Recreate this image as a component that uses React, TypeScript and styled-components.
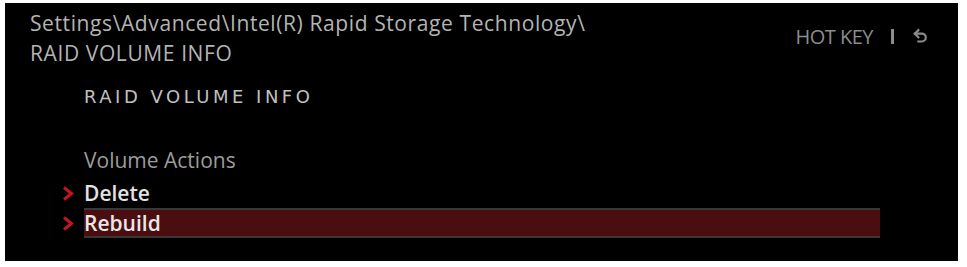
import React from "react";
import styled, { createGlobalStyle } from "styled-components";

const GlobalStyle = createGlobalStyle`
  html, body {
    margin: 0;
    padding: 0;
    background: #ffffff;
  }
`;

const Panel = styled.div`
  margin: 3px 9px 6px 5px;
  height: 258px;
  background: #000000;
  display: flex;
  flex-direction: column;
  font-family: "Open Sans", "Noto Sans", sans-serif;
  overflow: hidden;
`;

const Header = styled.div`
  display: flex;
  justify-content: space-between;
  align-items: flex-start;
  padding: 5px 29px 0 25px;
`;

const Breadcrumb = styled.div`
  color: #b4b4b4;
  font-size: 21px;
  letter-spacing: 0.6px;
  line-height: 30px;
`;

const HotKey = styled.div`
  display: flex;
  align-items: center;
  gap: 18px;
  margin-top: 15px;
  color: #8c8c8c;
  font-size: 20px;
  letter-spacing: -0.5px;
`;

const Divider = styled.span`
  width: 3px;
  height: 15px;
  background: #8c8c8c;
`;

const Content = styled.div`
  display: flex;
  flex-direction: column;
  padding: 16px 0 0 55px;
`;

const Heading = styled.div`
  margin-left: 24px;
  color: #c0c0c0;
  font-family: "DejaVu Sans", sans-serif;
  font-size: 18px;
  letter-spacing: 3.5px;
  line-height: 26px;
`;

const SectionLabel = styled.div`
  margin: 36px 0 4px 24px;
  color: #9c9c9c;
  font-size: 21px;
  line-height: 28px;
`;

const Item = styled.div`
  display: flex;
  align-items: center;
`;

const Chevron = styled.span`
  width: 24px;
  display: flex;
  align-items: center;
  padding-left: 2px;
  box-sizing: border-box;
`;

const Label = styled.div<{ $selected?: boolean }>`
  width: 796px;
  height: 26px;
  display: flex;
  align-items: center;
  color: ${(p) => (p.$selected ? "#e8e8e8" : "#e2e2e2")};
  font-size: 21px;
  font-weight: 600;
  background: ${(p) => (p.$selected ? "#4b0e10" : "transparent")};
  border-top: 2px solid ${(p) => (p.$selected ? "#383838" : "transparent")};
  border-bottom: 2px solid ${(p) => (p.$selected ? "#383838" : "transparent")};
`;

const ChevronIcon = () => (
  <svg width="12" height="15" viewBox="0 0 12 15">
    <polyline
      points="2,1.5 9.5,7.5 2,13.5"
      fill="none"
      stroke="#c8141c"
      strokeWidth="3"
    />
  </svg>
);

const BackIcon = () => (
  <svg
    width="17"
    height="17"
    viewBox="0 0 24 24"
    fill="none"
    stroke="#8c8c8c"
    strokeWidth="3"
    strokeLinecap="square"
    strokeLinejoin="miter"
  >
    <path d="M9 13 4 8l5-5" />
    <path d="M4 8h10a5.5 5.5 0 0 1 0 11H9" />
  </svg>
);

const items = [
  { label: "Delete", selected: false },
  { label: "Rebuild", selected: true },
];

export default function App() {
  return (
    <>
      <GlobalStyle />
      <Panel>
        <Header>
          <Breadcrumb>
            Settings\Advanced\Intel(R) Rapid Storage Technology\
            <br />
            RAID VOLUME INFO
          </Breadcrumb>
          <HotKey>
            <span>HOT KEY</span>
            <Divider />
            <BackIcon />
          </HotKey>
        </Header>
        <Content>
          <Heading>RAID VOLUME INFO</Heading>
          <SectionLabel>Volume Actions</SectionLabel>
          {items.map((it) => (
            <Item key={it.label}>
              <Chevron>
                <ChevronIcon />
              </Chevron>
              <Label $selected={it.selected}>{it.label}</Label>
            </Item>
          ))}
        </Content>
      </Panel>
    </>
  );
}
